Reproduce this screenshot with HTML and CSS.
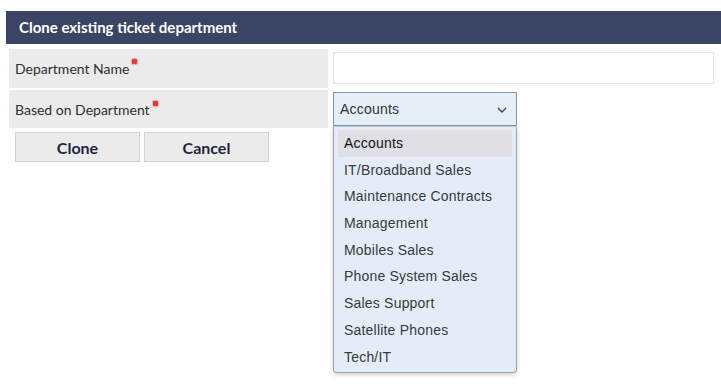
FILE: index.html
```html
<!DOCTYPE html>
<html lang="en">
<head>
  <meta charset="UTF-8" />
  <title>Clone existing ticket department</title>
  <link rel="stylesheet" href="styles.css">
</head>
<body>
  <div class="panel">
    <h2 class="panel-title">Clone existing ticket department</h2>

    <!-- Form rows -->
    <div class="form-row first">
      <div class="label-cell">Department Name<span class="req"></span></div>
      <div class="field-cell">
        <input type="text" class="text-input" />
      </div>
    </div>
    <div class="form-row second">
      <div class="label-cell">Based on Department<span class="req"></span></div>
      <div class="field-cell">
        <div class="select-wrap">
          <div class="select-box">
            <span>Accounts</span>
            <svg class="chevron" width="10" height="6" viewBox="0 0 10 6">
              <path d="M1 1 L5 5 L9 1" fill="none" stroke="#444" stroke-width="1.4" />
            </svg>
          </div>
          <!-- Open option list -->
          <ul class="select-list">
            <li class="selected">Accounts</li>
            <li>IT/Broadband Sales</li>
            <li>Maintenance Contracts</li>
            <li>Management</li>
            <li>Mobiles Sales</li>
            <li>Phone System Sales</li>
            <li>Sales Support</li>
            <li>Satellite Phones</li>
            <li>Tech/IT</li>
          </ul>
        </div>
      </div>
    </div>

    <div class="actions">
      <button class="btn">Clone</button>
      <button class="btn">Cancel</button>
    </div>
  </div>
</body>
</html>
```

FILE: styles.css
```css
* {
  margin: 0;
  padding: 0;
  box-sizing: border-box;
}
html, body {
  min-height: 388px;
}
body {
  background: #fff;
  font-family: 'Lato', sans-serif;
  color: #333;
}
.panel {
  padding-top: 11px;
  min-height: 388px;
}
.panel-title {
  margin-left: 6px;
  height: 33px;
  line-height: 33px;
  padding-left: 13px;
  background: #3a4565;
  color: #fff;
  font-size: 15px;
  font-weight: 700;
}
/* Form rows */
.form-row {
  display: flex;
  margin-left: 9px;
}
.form-row.first {
  margin-top: 5px;
  height: 39px;
}
.form-row.second {
  margin-top: 2px;
  height: 38px;
  position: relative;
  z-index: 5;
}
.label-cell {
  width: 319px;
  background: #ebebeb;
  padding-left: 6px;
  font-size: 14px;
  display: flex;
  align-items: center;
  color: #2e2e2e;
}
.req {
  display: inline-block;
  width: 5px;
  height: 5px;
  background: #e03a3a;
  margin-left: 3px;
  align-self: flex-start;
  margin-top: 10px;
  border-radius: 1px;
  box-shadow: 0 0 1px 1px rgba(224, 58, 58, 0.35);
}
.form-row.second .req {
  margin-top: 11px;
}
.field-cell {
  margin-left: 5px;
  flex: 1;
  position: relative;
}
.text-input {
  margin-top: 3px;
  width: 381px;
  height: 32px;
  border: 1px solid #e2e2e2;
  background: #fff;
  outline: none;
}
.select-wrap {
  position: relative;
  margin-top: 2px;
  width: 184px;
}
.select-box {
  height: 34px;
  border: 1px solid #7d9bb6;
  background: #e6eef8;
  display: flex;
  align-items: center;
  justify-content: space-between;
  padding: 0 9px 0 6px;
  font-family: 'Liberation Sans', Arial, sans-serif;
  font-size: 14px;
  letter-spacing: 0.2px;
  color: #333;
}
.chevron {
  margin-top: 2px;
}
.select-list {
  position: absolute;
  top: 34px;
  left: 0;
  width: 184px;
  height: 247px;
  list-style: none;
  background: #e4edf7;
  border: 1px solid #a3a3a3;
  border-top-color: #c8c8c8;
  border-radius: 0 0 4px 4px;
  box-shadow: 0 2px 4px rgba(0, 0, 0, 0.18);
  padding: 3px 4px 0 4px;
  font-family: 'Liberation Sans', Arial, sans-serif;
  font-size: 14px;
  letter-spacing: 0.2px;
  color: #3a3a3a;
}
.select-list li {
  height: 26.7px;
  line-height: 26.7px;
  padding-left: 6px;
}
.select-list li.selected {
  background: #dfdfe4;
  border-radius: 2px;
  color: #111;
}
/* Buttons */
.actions {
  display: flex;
  gap: 4px;
  margin: 4px 0 0 15px;
}
.btn {
  width: 125px;
  height: 30px;
  background: #ebebeb;
  border: 1px solid #d4d4d4;
  font-family: 'Lato', sans-serif;
  font-size: 16px;
  font-weight: 700;
  color: #1f2740;
  cursor: pointer;
}
```
